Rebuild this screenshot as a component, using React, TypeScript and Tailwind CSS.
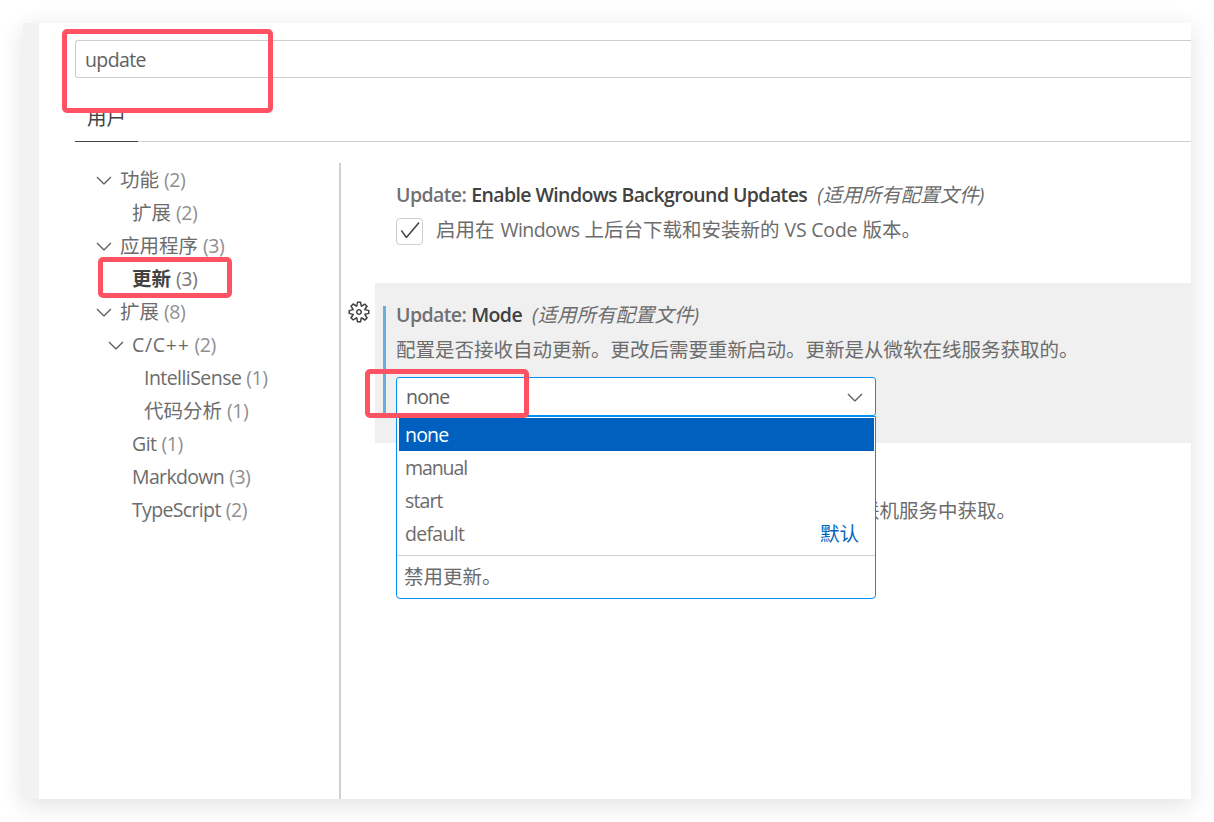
import type { ReactNode } from 'react'

type TreeItem = { label: string; count: number; indent: string; expandable?: boolean; selected?: boolean; tracking?: string }

const tree: TreeItem[] = [
  { label: '功能', count: 2, indent: 'pl-[17px]', expandable: true },
  { label: '扩展', count: 2, indent: 'pl-[57px]' },
  { label: '应用程序', count: 3, indent: 'pl-[17px]', expandable: true },
  { label: '更新', count: 3, indent: 'pl-[57px]', selected: true },
  { label: '扩展', count: 8, indent: 'pl-[17px]', expandable: true },
  { label: 'C/C++', count: 2, indent: 'pl-[29px]', expandable: true, tracking: 'tracking-[0.7px]' },
  { label: 'IntelliSense', count: 1, indent: 'pl-[69px]', tracking: 'tracking-[-0.55px]' },
  { label: '代码分析', count: 1, indent: 'pl-[69px]' },
  { label: 'Git', count: 1, indent: 'pl-[57px]', tracking: 'tracking-[-0.5px]' },
  { label: 'Markdown', count: 3, indent: 'pl-[57px]', tracking: 'tracking-[-0.65px]' },
  { label: 'TypeScript', count: 2, indent: 'pl-[57px]', tracking: 'tracking-[-0.65px]' },
]

const options = [
  { value: 'none', tracking: 'tracking-[-0.8px]', active: true },
  { value: 'manual', tracking: 'tracking-[-1.1px]' },
  { value: 'start', tracking: 'tracking-[-0.9px]' },
  { value: 'default', tracking: 'tracking-[-0.7px]', isDefault: true },
]

export default function App() {
  return (
    <div className="relative w-[1214px] h-[822px] overflow-hidden bg-white p-[23px] font-['Open_Sans','Noto_Sans_CJK_SC',sans-serif] text-[19.5px] leading-[33px] text-[#6c6c6c] whitespace-nowrap">
      <div className="flex w-[1168px] h-[776px] bg-white shadow-[0_6px_24px_rgba(0,0,0,0.12)]">
        <div className="w-4 bg-[#f2f2f2]" />
        <div className="flex-1 min-w-0 flex flex-col pl-9 pt-[17px] overflow-hidden">
          <SearchBox />
          <Tabs />
          <div className="flex flex-1 pt-[21px]">
            <Tree />
            <Settings />
          </div>
        </div>
      </div>

      {/* Highlights */}
      <Highlight className="left-[62px] top-[29px] w-[211px] h-[84px]" />
      <Highlight className="left-[98px] top-[257px] w-[134px] h-[41px]" />
      <Highlight className="left-[365px] top-[369px] w-[164px] h-[49px]" />
    </div>
  )
}

function Highlight({ className }: { className: string }) {
  return <div className={`absolute z-20 rounded-[5px] border-5 border-[#ff5263] ${className}`} />
}

function Icon({ d, className = '' }: { d: string; className?: string }) {
  return (
    <svg viewBox="0 0 16 16" fill="currentColor" fillRule="evenodd" className={`w-6 h-6 shrink-0 ${className}`}>
      <path d={d} />
    </svg>
  )
}

const chevronDown = 'M7.976 10.072l4.357-4.357.62.618L8.284 11h-.618L3 6.333l.619-.618 4.357 4.357z'
const check = 'M14.431 3.323l-8.47 10-.79-.036-3.35-4.77.818-.574 2.978 4.24 8.051-9.506.764.646z'
const gear =
  'M9.1 4.4L8.6 2H7.4l-.5 2.4-.7.3-2-1.3-.9.8 1.3 2-.2.7-2.4.5v1.2l2.4.5.3.8-1.3 2 .8.8 2-1.3.8.3.4 2.3h1.2l.5-2.4.8-.3 2 1.3.8-.8-1.3-2 .3-.8 2.3-.4V7.4l-2.4-.5-.3-.8 1.3-2-.8-.8-2 1.3-.7-.2zM9.4 1l.5 2.4L12 2.1l2 2-1.4 2.1 2.4.4v2.8l-2.4.5L14 12l-2 2-2.1-1.4-.5 2.4H6.6l-.5-2.4L4 13.9l-2-2 1.4-2.1L1 9.4V6.6l2.4-.5L2.1 4l2-2 2.1 1.4.4-2.4h2.8zm.6 7c0 1.1-.9 2-2 2s-2-.9-2-2 .9-2 2-2 2 .9 2 2zM8 9c.6 0 1-.4 1-1s-.4-1-1-1-1 .4-1 1 .4 1 1 1z'

function SearchBox() {
  return (
    <div className="flex items-center h-[38px] shrink-0 rounded-l-[3px] border border-r-0 border-[#cecece] pl-[9px] text-[#616161]">
      <span className="tracking-[-0.6px]">update</span>
    </div>
  )
}

function Tabs() {
  return (
    <div className="flex items-end h-16 shrink-0 border-b border-[#d0d0d0]">
      <div className="w-[63px] h-[41px] -mb-px border-b border-[#424242] pl-3 text-[#424242]">用户</div>
    </div>
  )
}

function Tree() {
  return (
    <div className="w-[266px] shrink-0 border-r-2 border-[#d0d0d0]">
      {tree.map((item, i) => (
        <div key={i} className={`flex items-center h-[33px] ${item.indent}`}>
          {item.expandable && <Icon d={chevronDown} className="mr-1 text-[#616161]" />}
          <span className={`${item.tracking ?? ''} ${item.selected ? 'font-bold text-[#424242]' : ''}`}>{item.label}</span>
          <span className={`ml-[5px] tracking-[-0.5px] ${item.selected ? 'text-[#777]' : 'text-[#909090]'}`}>({item.count})</span>
        </div>
      ))}
    </div>
  )
}

function SettingTitle({ name }: { name: string }) {
  return (
    <div className="flex items-center h-[33px]">
      <span className="font-semibold tracking-[-0.6px] text-[#717171]">Update:</span>
      <span className="ml-[5px] font-semibold tracking-[-0.6px] text-[#424242]">{name}</span>
      <span className="ml-[10px] italic text-[#6c6c6c]">(适用所有配置文件)</span>
    </div>
  )
}

function Description({ children }: { children: ReactNode }) {
  return <div className="h-[33px]">{children}</div>
}

function Settings() {
  return (
    <div className="flex-1 min-w-0">
      <div className="h-[120px] pl-[55px] pt-[15px]">
        <SettingTitle name="Enable Windows Background Updates" />
        <div className="flex mt-[2px]">
          <div className="flex justify-center w-[27px] h-[27px] mt-[5px] mr-[13px] rounded-[4px] border border-[#cecece] text-[#424242]">
            <Icon d={check} className="-mt-px" />
          </div>
          <Description>
            启用在 <span className="ml-px tracking-[-0.6px]">Windows</span> 上后台下载和安装新的 <span className="tracking-[-0.2px]">VS Code</span> 版本。
          </Description>
        </div>
      </div>

      <div className="flex h-[160px]">
        <div className="w-[34px] pt-[17px] pl-[6px]">
          <Icon d={gear} className="text-[#424242]" />
        </div>
        <div className="flex-1 bg-[#f0f0f0] pl-2 pt-[23px]">
          <div className="flex flex-col h-[108px] border-l-3 border-[#66afe0] pl-[10px]">
            <div className="-mt-[8px]">
              <SettingTitle name="Mode" />
            </div>
            <div className="mt-[2px]">
              <Description>配置是否接收自动更新。更改后需要重新启动。更新是从微软在线服务获取的。</Description>
            </div>
            <ModeSelect />
          </div>
        </div>
      </div>

      <div className="h-[120px] pl-[519px] pt-[51px]">
        <Description>联机服务中获取。</Description>
      </div>
    </div>
  )
}

function ModeSelect() {
  return (
    <div className="relative w-[480px] mt-[11px]">
      <div className="flex items-center justify-between h-[39px] rounded-[3px] border border-[#0090f1] bg-white pl-[9px] pr-2 text-[#616161]">
        <span className="tracking-[-0.8px]">none</span>
        <Icon d={chevronDown} />
      </div>

      {/* Dropdown list */}
      <div className="absolute left-0 top-[39px] z-10 w-[480px] h-[183px] rounded-b-[4px] border border-[#0090f1] bg-white">
        <div className="h-[139px] border-b border-[#cecece] pl-[2px] pr-px pt-px">
          {options.map(o => (
            <div key={o.value} className={`flex items-center justify-between h-[33px] pl-[6px] pr-[15px] ${o.active ? 'bg-[#0060c0] text-white' : ''}`}>
              <span className={o.tracking}>{o.value}</span>
              {o.isDefault && <span className="text-[#0066bf]">默认</span>}
            </div>
          ))}
        </div>
        <div className="pl-[7px] pt-1">禁用更新。</div>
      </div>
    </div>
  )
}
